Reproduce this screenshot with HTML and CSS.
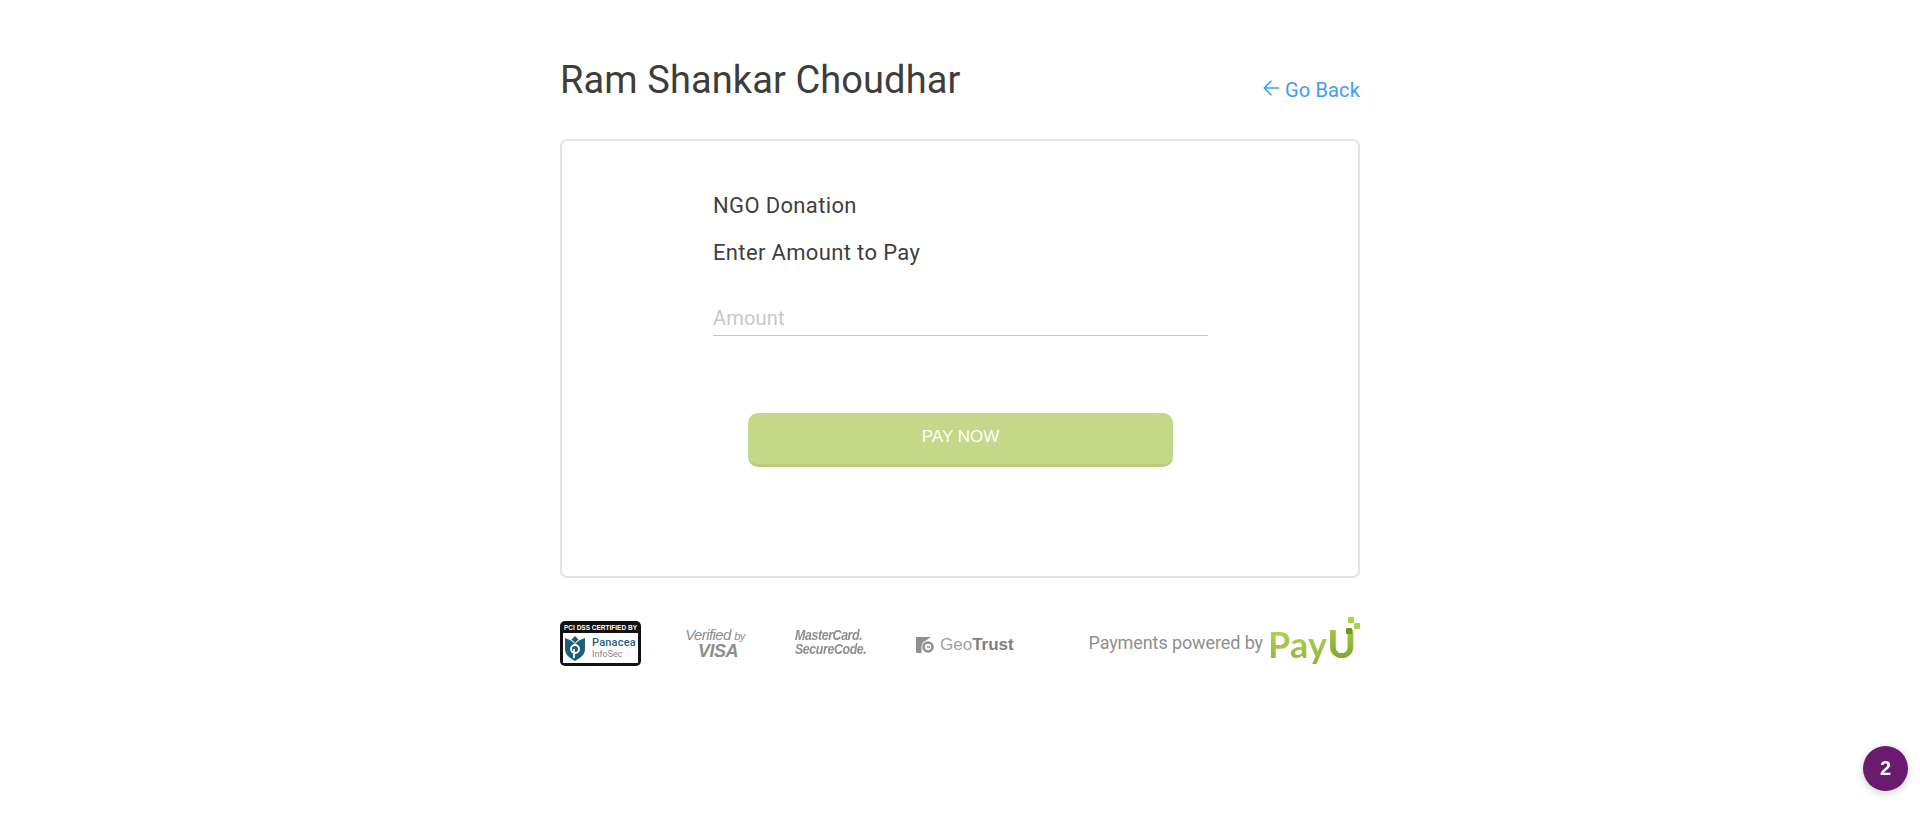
FILE: index.html
```html
<!DOCTYPE html>
<html lang="en">
<head>
<meta charset="utf-8">
<title>Ram Shankar Choudhar</title>
<link rel="stylesheet" href="styles.css">
</head>
<body>
<main class="page">
  <header class="head">
    <h1 class="merchant">Ram Shankar Choudhar</h1>
    <a class="back" href="#">
      <svg class="back-icon" width="16" height="16" viewBox="0 0 16 16" fill="none" stroke="#3d9cf5" stroke-width="1.5"><path d="M16 8H1.500M8.500 .8L1.300 8l7.200 7.200"/></svg>
      <span>Go Back</span>
    </a>
  </header>
  <section class="card">
    <div class="form">
      <p class="line line-first">NGO Donation</p>
      <p class="line line-second">Enter Amount to Pay</p>
      <input class="amount" type="text" placeholder="Amount">
      <button class="pay" type="button">PAY NOW</button>
    </div>
  </section>
  <footer class="foot">
    <div class="pci">
      <div class="pci-top">PCI DSS CERTIFIED BY</div>
      <div class="pci-body">
        <svg width="20" height="26" viewBox="0 0 20 26"><path d="M0 3l6 2.500L10 9l4-3.500L20 3v11c0 6-5 9-10 12C5 23 0 20 0 14z" fill="#1f5d7c"/><path d="M6.500 4.500L10 1l3.500 3.500L10 8z" fill="#1f5d7c"/><circle cx="10" cy="14" r="4" fill="none" stroke="#fff" stroke-width="1.800"/><path d="M9 14v9" stroke="#fff" stroke-width="1.800"/></svg>
        <div class="pci-names"><span class="pci-name">Panacea</span><span class="pci-sub">InfoSec</span></div>
      </div>
    </div>
    <div class="visa"><span class="visa-top">Verified <small>by</small></span><span class="visa-main">VISA</span></div>
    <div class="mc"><span>MasterCard.</span><span>SecureCode.</span></div>
    <div class="geo">
      <svg width="18" height="16" viewBox="0 0 18 16"><path d="M0 0h15l-5 3.500a7 7 0 0 0-4.500 6.500v6H1.500A1.500 1.500 0 0 1 0 14.500z" fill="#8f8f8f"/><circle cx="12" cy="10" r="4.500" fill="none" stroke="#8f8f8f" stroke-width="2.600"/><path d="M11 10h3" stroke="#8f8f8f" stroke-width="1.500"/></svg>
      <span class="geo-text">Geo<b>Trust</b></span>
    </div>
    <div class="powered">
      <span class="powered-text">Payments powered by</span>
      <span class="payu"><span class="payu-pay">Pay</span><span class="payu-u">U</span><i class="dot dot-a"></i><i class="dot dot-b"></i><i class="dot dot-c"></i></span>
    </div>
  </footer>
</main>
<div class="badge">2</div>
</body>
</html>
```
FILE: styles.css
```css
* { box-sizing: border-box; }
html, body { margin: 0; height: 100%; background: #fff; }
body { font-family: Roboto, sans-serif; color: #3f3f3f; overflow: hidden; }
.page { width: 800px; margin: 0 auto; padding-top: 52px; }
.head { display: flex; justify-content: space-between; align-items: flex-end; height: 87px; padding-bottom: 37px; }
.merchant { margin: 0 0 -5px; font-size: 38px; font-weight: 400; line-height: 54px; letter-spacing: .1px; color: #3f3c3c; }
.back { display: flex; align-items: center; gap: 6px; color: #3d9cf5; font-size: 20px; text-decoration: none; line-height: 24px; letter-spacing: .15px; }
.back-icon { margin-top: -5px; }
.card { height: 439px; border: 2px solid #e4e4e4; border-radius: 7px; padding: 51px 0 0 151px; }
.form { width: 495px; display: flex; flex-direction: column; }
.line { margin: 0; font-size: 22px; line-height: 28px; color: #3f3f3f; letter-spacing: .35px; }
.line-second { margin-top: 19px; }
.amount { margin-top: 34px; width: 495px; height: 35px; border: 0; border-bottom: 1px solid #c6c6c6; padding: 0; font: 400 20px Roboto, sans-serif; letter-spacing: .2px; outline: none; background: transparent; }
.amount::placeholder { color: #c8c8c8; opacity: 1; }
.pay { margin: 77px 0 0 35px; width: 425px; height: 54px; border: 0; border-bottom: 3px solid #b9cc7c; border-radius: 10px; background: #c3d888; color: #fff; font: 400 17px "Liberation Sans", sans-serif; padding-bottom: 4px; }
.foot { display: flex; align-items: center; height: 62px; margin-top: 34px; position: relative; }
.pci { width: 81px; height: 45px; background: #111; border-radius: 5px; padding: 3px; display: flex; flex-direction: column; flex: none; }
.pci-top { color: #fff; font: 700 6.500px/8px "Liberation Sans", sans-serif; text-align: center; white-space: nowrap; }
.pci-body { flex: 1; background: #fff; margin-top: 1px; display: flex; align-items: center; gap: 6px; padding-left: 2px; overflow: hidden; }
.pci-names { display: flex; flex-direction: column; padding-left: 1px; }
.pci-name { font: 500 11px/12px Roboto, sans-serif; color: #1d5f7c; letter-spacing: .2px; }
.pci-sub { font: 400 9px/10px Roboto, sans-serif; color: #888; }
.visa { margin-left: 43px; width: 62px; display: flex; flex-direction: column; align-items: center; color: #8e8e8e; font-family: "Liberation Sans", sans-serif; font-style: italic; flex: none; margin-top: -2px; }
.visa-top { font-size: 15px; line-height: 15px; white-space: nowrap; letter-spacing: -.6px; }
.visa-top small { font-size: 11px; }
.visa-main { font-size: 18px; font-weight: 700; line-height: 14px; margin-left: 6px; letter-spacing: -.5px; }
.mc { margin-left: 49px; display: flex; flex-direction: column; color: #8e8e8e; font: italic 700 15.500px/14px "Liberation Sans", sans-serif; letter-spacing: -.5px; flex: none; width: 72px; transform: scaleX(.8); transform-origin: left center; white-space: nowrap; margin-top: -2px; }
.geo { margin-left: 49px; display: flex; align-items: center; gap: 6px; flex: none; padding-top: 4px; }
.geo-text { font: 400 17px/18px "Liberation Sans", sans-serif; color: #a0a0a0; }
.geo-text b { color: #808080; }
.powered { margin-left: auto; display: flex; align-items: center; gap: 5px; color: #8f8f8f; padding-bottom: 2px; }
.powered-text { font-size: 18px; letter-spacing: -.1px; }
.payu { position: relative; display: inline-flex; align-items: baseline; font: 700 36px/40px Lato, sans-serif; width: 92px; padding-top: 2px; }
.payu-pay { letter-spacing: .3px; background: linear-gradient(#bcd65f, #8fb636); -webkit-background-clip: text; background-clip: text; color: transparent; }
.payu-u { font-weight: 900; font-size: 38px; line-height: 40px; background: linear-gradient(#a6cb47, #7ca52a); -webkit-background-clip: text; background-clip: text; color: transparent; }
.dot { position: absolute; width: 6px; height: 6px; border-radius: 1px; background: #a9cf4d; }
.dot-a { right: 0; top: 2px; }
.dot-b { right: 6px; top: -4px; }
.dot-c { right: 8px; top: 7px; background: #6f9a22; }
.badge { position: fixed; right: 12px; bottom: 41px; width: 45px; height: 45px; border-radius: 50%; background: #6a1b70; color: #fff; display: flex; align-items: center; justify-content: center; font: 700 20px "Liberation Sans", sans-serif; box-shadow: 0 2px 8px rgba(0,0,0,.2); }
```
